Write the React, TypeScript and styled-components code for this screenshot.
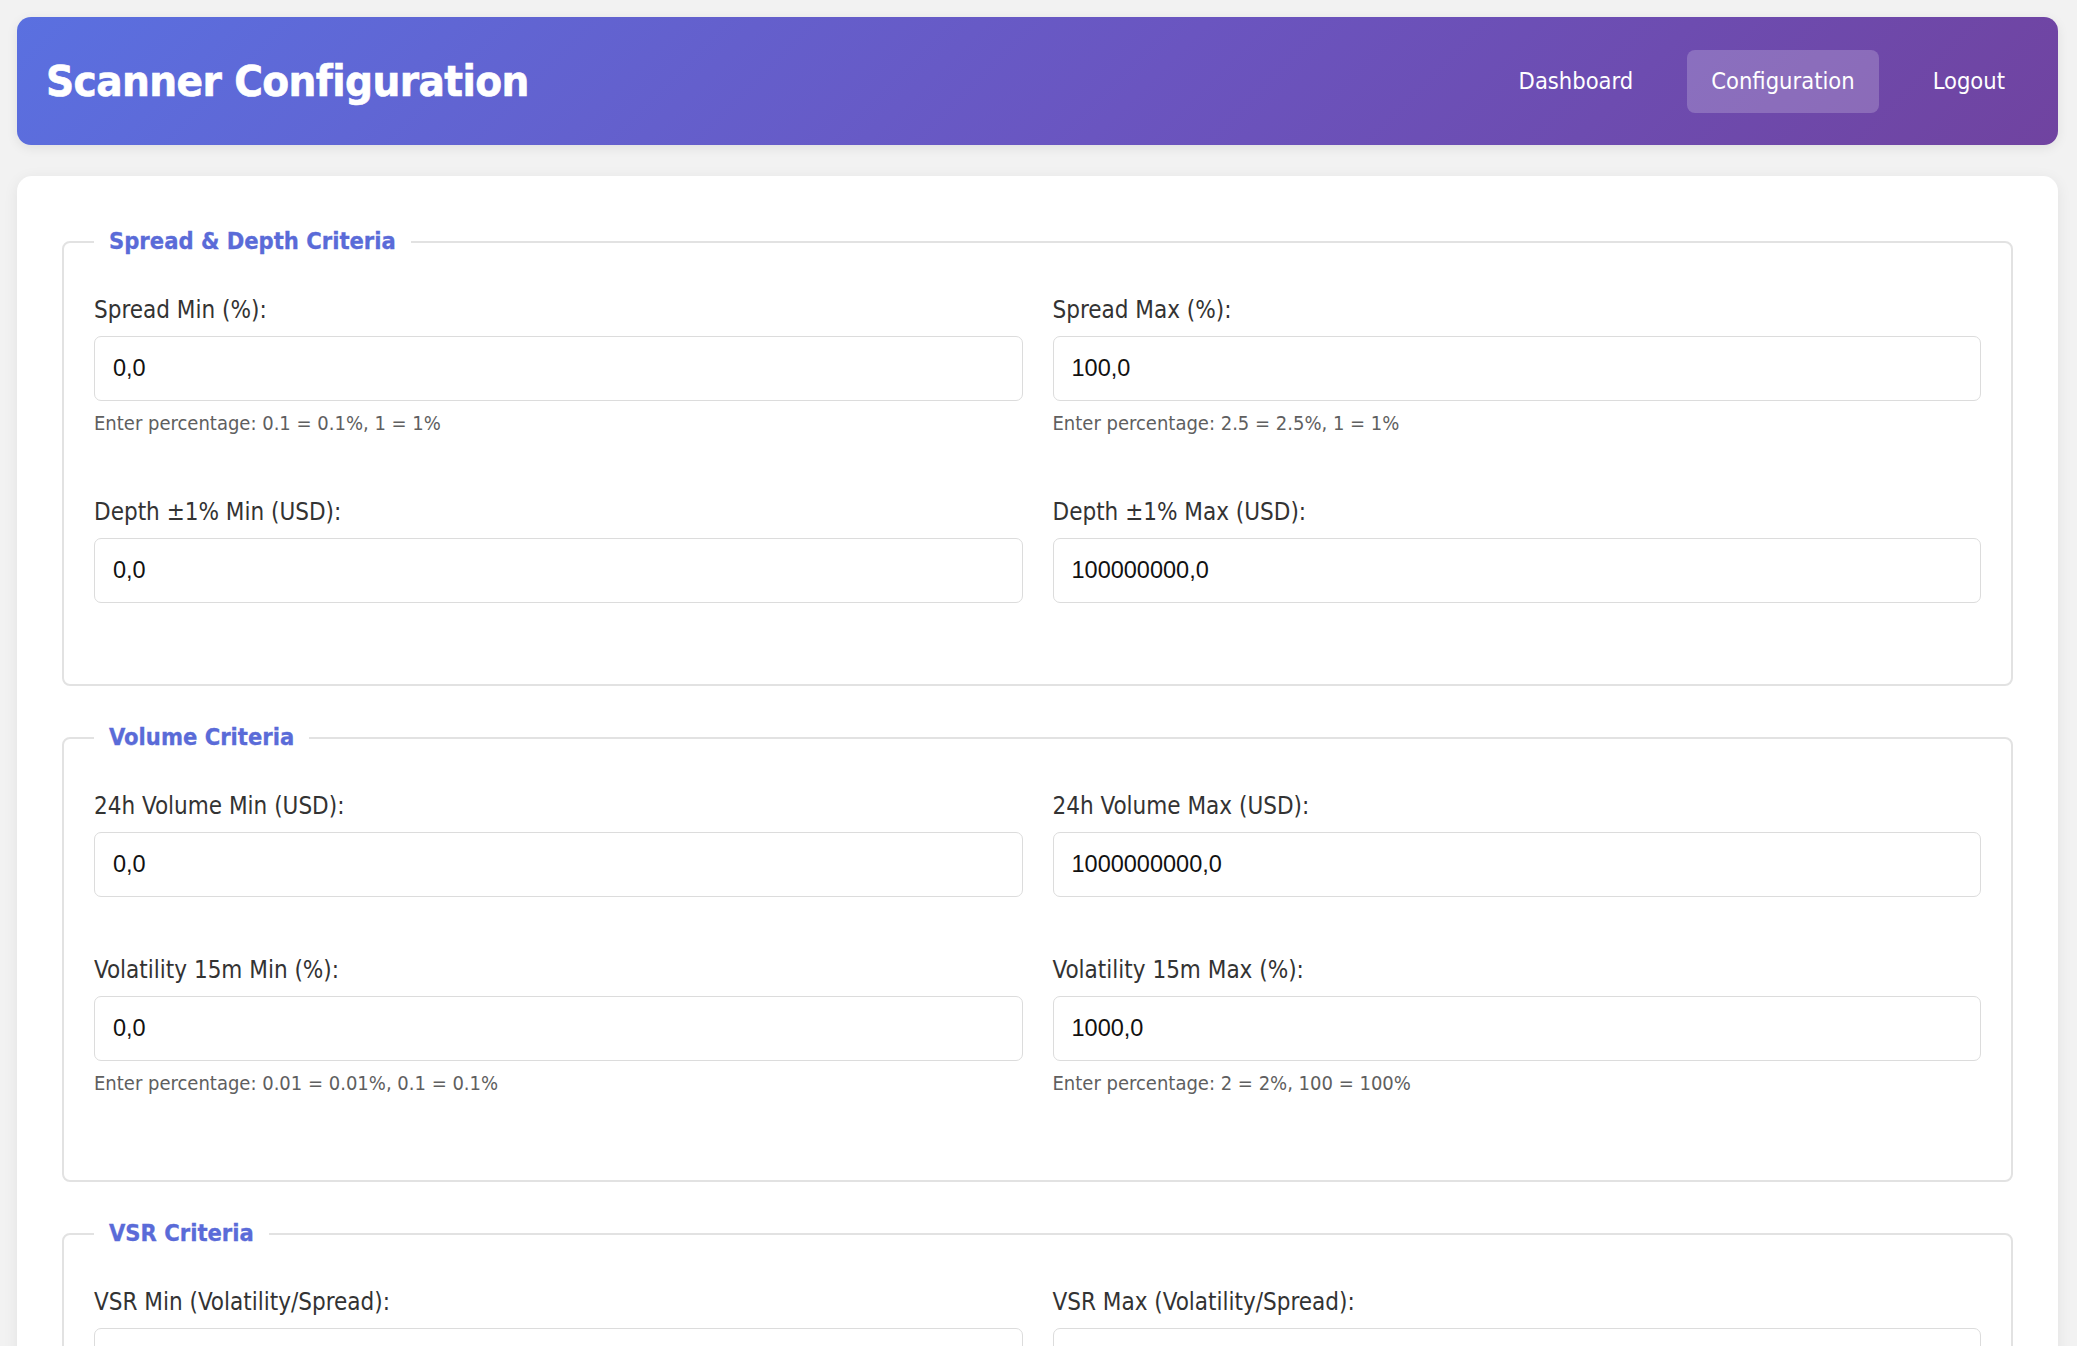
import React from 'react';
import styled, { createGlobalStyle } from 'styled-components';

const colors = {
  page: '#f2f2f2',
  white: '#ffffff',
  label: '#333333',
  hint: '#5f5f5f',
  accent: '#5a6bd8',
  border: '#dcdcdc',
  fieldsetBorder: '#e2e2e2',
};

const GlobalStyle = createGlobalStyle`
  html {
    overflow: hidden;
  }

  body {
    margin: 0;
    padding: 17px 19px 17px 17px;
    background-color: ${colors.page};
    font-family: "DejaVu Sans Condensed", "DejaVu Sans", sans-serif;
    color: ${colors.label};
  }

  * {
    box-sizing: border-box;
  }
`;

const HeaderBar = styled.header`
  display: flex;
  align-items: center;
  justify-content: space-between;
  height: 128px;
  padding: 0 29px;
  border-radius: 14px;
  background: linear-gradient(135deg, #5a70e0 0%, #6a55c0 55%, #7043a0 100%);
  color: ${colors.white};
  box-shadow: 0 3px 12px rgba(0, 0, 0, 0.08);
`;

const Title = styled.h1`
  margin: 0;
  font-size: 43.5px;
  font-weight: 700;
  line-height: 1.2;
  letter-spacing: -0.6px;
  -webkit-text-stroke: 0.6px ${colors.white};
`;

const Nav = styled.nav`
  display: flex;
  align-items: center;
  gap: 30px;
`;

const NavLink = styled.a<{ $active?: boolean }>`
  padding: 12px 24px;
  border-radius: 8px;
  font-size: 23.5px;
  line-height: 39px;
  color: ${colors.white};
  text-decoration: none;
  background-color: ${(p) => (p.$active ? 'rgba(255, 255, 255, 0.2)' : 'transparent')};
`;

const Card = styled.main`
  margin-top: 31px;
  padding: 45px;
  background-color: ${colors.white};
  border-radius: 15px;
  box-shadow: 0 3px 15px rgba(0, 0, 0, 0.07);
`;

const Section = styled.fieldset`
  margin: 0 0 31px;
  padding: 29px 30px 28px;
  min-width: 0;
  border: 2px solid ${colors.fieldsetBorder};
  border-radius: 8px;
`;

const Legend = styled.legend`
  padding: 0 15px;
  font-size: 23.5px;
  font-weight: 700;
  line-height: 41px;
  color: ${colors.accent};
  -webkit-text-stroke: 0.3px ${colors.accent};
`;

const Grid = styled.div`
  display: grid;
  grid-template-columns: 1fr 1fr;
  column-gap: 30px;
`;

const Group = styled.div`
  margin-bottom: 53.5px;
`;

const Label = styled.label`
  display: block;
  margin-bottom: 7px;
  font-size: 24px;
  line-height: 38px;
  color: ${colors.label};
`;

const Input = styled.input`
  display: block;
  width: 100%;
  height: 65px;
  padding: 0 18px;
  border: 1.5px solid ${colors.border};
  border-radius: 7px;
  font-family: "Liberation Sans", Arial, sans-serif;
  font-size: 23.5px;
  color: #111;
  background-color: ${colors.white};
  outline: none;
`;

const Hint = styled.small`
  display: block;
  margin-top: 7px;
  font-size: 20px;
  line-height: 31px;
  color: ${colors.hint};
`;

interface Field {
  label: string;
  value: string;
  hint?: string;
}

interface SectionData {
  title: string;
  fields: Field[];
}

const sections: SectionData[] = [
  {
    title: 'Spread & Depth Criteria',
    fields: [
      { label: 'Spread Min (%):', value: '0,0', hint: 'Enter percentage: 0.1 = 0.1%, 1 = 1%' },
      { label: 'Spread Max (%):', value: '100,0', hint: 'Enter percentage: 2.5 = 2.5%, 1 = 1%' },
      { label: 'Depth ±1% Min (USD):', value: '0,0' },
      { label: 'Depth ±1% Max (USD):', value: '100000000,0' },
    ],
  },
  {
    title: 'Volume Criteria',
    fields: [
      { label: '24h Volume Min (USD):', value: '0,0' },
      { label: '24h Volume Max (USD):', value: '1000000000,0' },
      { label: 'Volatility 15m Min (%):', value: '0,0', hint: 'Enter percentage: 0.01 = 0.01%, 0.1 = 0.1%' },
      { label: 'Volatility 15m Max (%):', value: '1000,0', hint: 'Enter percentage: 2 = 2%, 100 = 100%' },
    ],
  },
  {
    title: 'VSR Criteria',
    fields: [
      { label: 'VSR Min (Volatility/Spread):', value: '0,0' },
      { label: 'VSR Max (Volatility/Spread):', value: '1000,0' },
    ],
  },
];

const App: React.FC = () => {
  return (
    <>
      <GlobalStyle />
      <HeaderBar>
        <Title>Scanner Configuration</Title>
        <Nav>
          <NavLink href="#">Dashboard</NavLink>
          <NavLink href="#" $active>
            Configuration
          </NavLink>
          <NavLink href="#">Logout</NavLink>
        </Nav>
      </HeaderBar>

      <Card>
        {sections.map((section) => (
          <Section key={section.title}>
            <Legend>{section.title}</Legend>
            <Grid>
              {section.fields.map((field) => (
                <Group key={field.label}>
                  <Label>{field.label}</Label>
                  <Input type="text" defaultValue={field.value} />
                  {field.hint && <Hint>{field.hint}</Hint>}
                </Group>
              ))}
            </Grid>
          </Section>
        ))}
      </Card>
    </>
  );
};

export default App;
